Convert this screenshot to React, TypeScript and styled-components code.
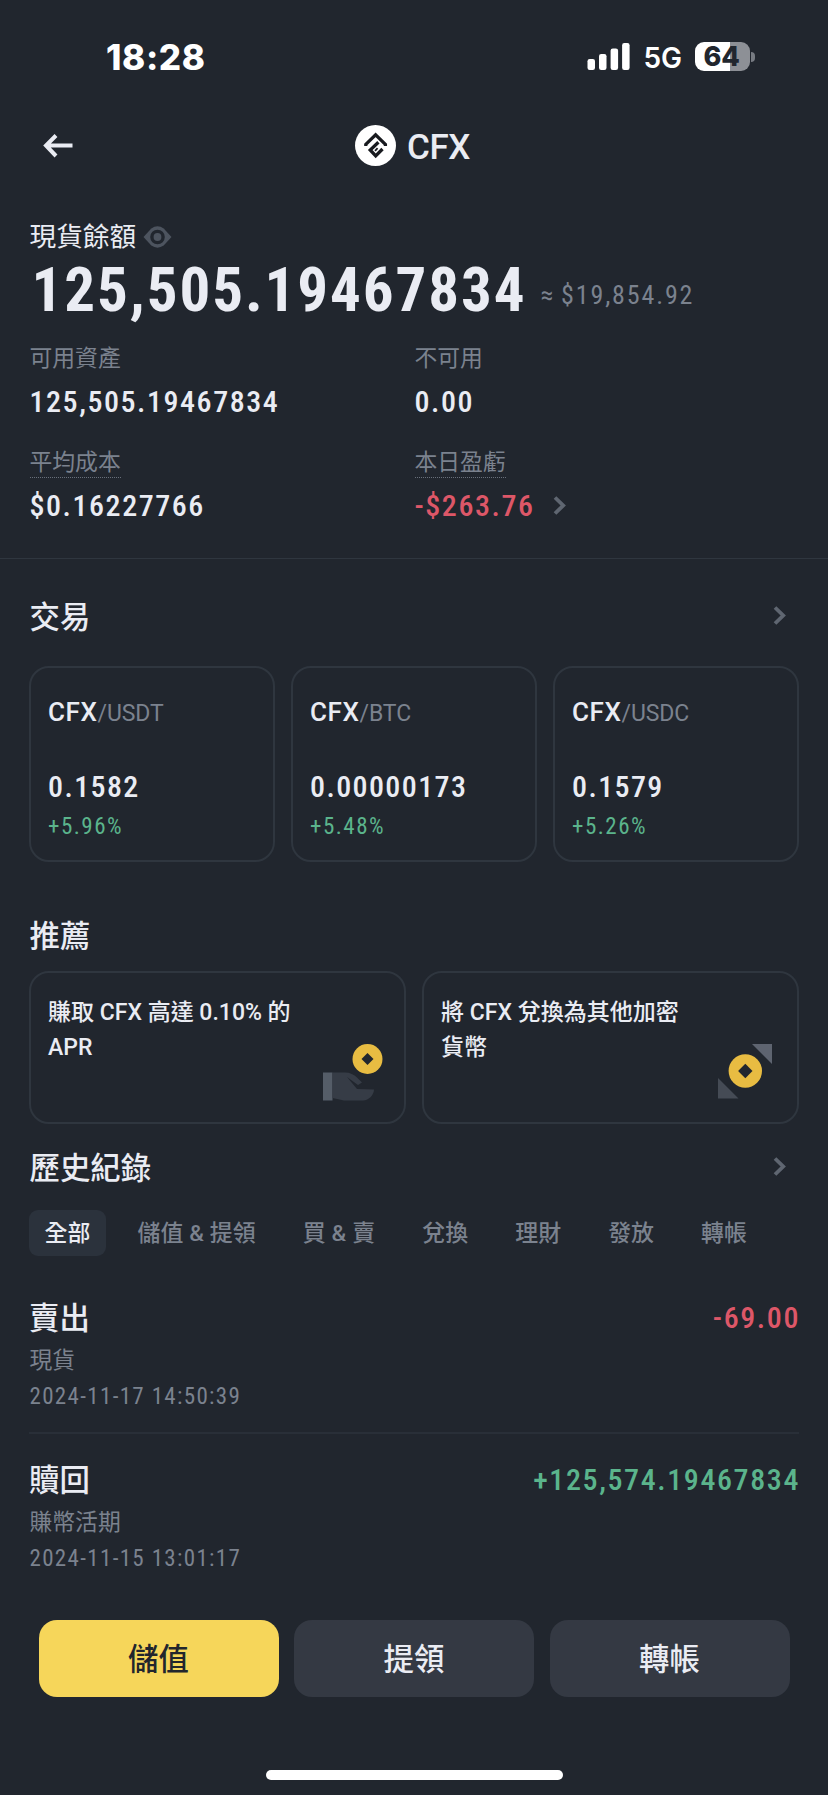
import React from "react";
import styled, { createGlobalStyle } from "styled-components";

const color = {
  bg: "#21262e",
  text: "#eaecf3",
  muted: "#7b828e",
  faint: "#5a616c",
  line: "#2f363f",
  green: "#5bb48c",
  red: "#dd5768",
  yellow: "#f6d65a",
  button: "#343943",
};

const GlobalStyle = createGlobalStyle`
  html, body { margin: 0; padding: 0; background: ${color.bg}; }
  * { box-sizing: border-box; }
  body { font-family: Roboto, "Noto Sans CJK TC", sans-serif; color: ${color.text}; }
`;

const Screen = styled.main`
  width: 828px;
  height: 1795px;
  display: flex;
  flex-direction: column;
  overflow: hidden;
  background: ${color.bg};
`;

const StatusBar = styled.header`
  height: 113px;
  display: flex;
  align-items: center;
  justify-content: space-between;
  padding: 0 73px 0 106px;
  font-family: Inter, sans-serif;
`;

const Clock = styled.span`
  font-size: 35px;
  font-weight: 800;
  line-height: 40px;
  letter-spacing: 0.6px;
  color: #fff;
`;

const StatusIcons = styled.div`
  display: flex;
  align-items: center;
  color: #fff;
`;

const Network = styled.span`
  margin: 2px 13px 0 13px;
  font-size: 28px;
  font-weight: 600;
  line-height: 30px;
`;

const Battery = styled.div`
  display: flex;
  align-items: center;
  gap: 1px;
`;

const BatteryBody = styled.div<{ $level: number }>`
  width: 55px;
  height: 29px;
  border-radius: 9px;
  display: flex;
  align-items: center;
  justify-content: center;
  padding-right: 2px;
  background: linear-gradient(90deg, #fff ${(p) => p.$level}%, #8d9096 ${(p) => p.$level}%);
  color: ${color.bg};
  font-size: 27px;
  font-weight: 800;
  letter-spacing: -0.3px;
  line-height: 29px;
`;

const BatteryTip = styled.div`
  width: 4px;
  height: 10px;
  border-radius: 0 5px 5px 0;
  background: #777b82;
`;

const NavBar = styled.nav`
  height: 65px;
  display: grid;
  grid-template-columns: 1fr auto 1fr;
  align-items: center;
  padding: 0 46px 0 43px;
`;

const CoinTitle = styled.h1`
  margin: 0;
  display: flex;
  align-items: center;
  gap: 11px;
  font-size: 35px;
  font-weight: 500;
  line-height: 40px;
  letter-spacing: -0.4px;

  span { margin-top: 4px; }
`;

const Balance = styled.section`
  padding: 41px 29px 25px 29.5px;
  border-bottom: 1px solid ${color.line};
`;

const BalanceLabel = styled.div`
  height: 36px;
  display: flex;
  align-items: center;
  gap: 7px;
  font-size: 26.7px;
  line-height: 37px;
`;

const Total = styled.div`
  height: 67px;
  display: flex;
  align-items: center;
  margin-left: 2px;
`;

const Amount = styled.span`
  margin-top: 4px;
  font-size: 61px;
  font-weight: 700;
  font-stretch: 75%;
  line-height: 67px;
  letter-spacing: 1.93px;
`;

const Approx = styled.span`
  margin: 12px 0 0 14px;
  font-size: 26px;
  line-height: 32px;
  font-stretch: 75%;
  letter-spacing: 1.85px;
  word-spacing: -2px;
  color: ${color.muted};
`;

const StatGrid = styled.div`
  display: grid;
  grid-template-columns: 385px 1fr;
  row-gap: 16px;
  margin-top: 19px;
`;

const StatLabel = styled.div`
  height: 34px;
  font-size: 22.8px;
  line-height: 35px;
  color: ${color.muted};
`;

const Hint = styled.span`
  display: inline-block;
  height: 33px;
  border-bottom: 1px dotted #69707b;
`;

const StatValue = styled.div<{ $tone?: string }>`
  height: 54px;
  display: flex;
  align-items: center;
  gap: 18px;
  font-size: 30px;
  font-weight: 500;
  font-stretch: 75%;
  line-height: 54px;
  letter-spacing: 1.55px;
  color: ${(p) => p.$tone ?? color.text};

  svg { margin-bottom: 2px; }
`;

const Section = styled.section<{ $top: number }>`
  padding: ${(p) => p.$top}px 29px 0;
`;

const SectionTitle = styled.h2`
  margin: 0;
  height: 44px;
  display: flex;
  align-items: center;
  justify-content: space-between;
  padding: 1px 13px 0 0.5px;
  font-size: 30.4px;
  font-weight: 500;
  line-height: 44px;

  svg { margin-bottom: 4px; }
`;

const Cards = styled.div<{ $columns: number; $top: number }>`
  display: grid;
  grid-template-columns: repeat(${(p) => p.$columns}, 1fr);
  gap: 16px;
  margin-top: ${(p) => p.$top}px;
`;

const Card = styled.article`
  border: 2px solid ${color.line};
  border-radius: 20px;
`;

const PairCard = styled(Card)`
  height: 196px;
  padding: 26px 17px 0;
`;

const PairName = styled.div`
  height: 36px;
  font-size: 26px;
  font-weight: 500;
  line-height: 36px;
  letter-spacing: 0.6px;

  span {
    font-size: 23px;
    font-weight: 400;
    letter-spacing: -0.1px;
    color: ${color.muted};
  }
`;

const PairPrice = styled.div`
  height: 40px;
  margin-top: 37px;
  font-size: 30px;
  font-weight: 500;
  font-stretch: 75%;
  line-height: 40px;
  letter-spacing: 1.4px;
`;

const PairChange = styled.div`
  height: 32px;
  margin-top: 4px;
  font-size: 23px;
  font-stretch: 75%;
  line-height: 32px;
  letter-spacing: 1.5px;
  color: ${color.green};
`;

const OfferCard = styled(Card)`
  height: 153px;
  display: flex;
  justify-content: space-between;
  padding: 22px 21px 18px 17px;
`;

const OfferText = styled.p`
  width: 250px;
  margin: 0;
  font-size: 23px;
  font-weight: 500;
  line-height: 35px;
`;

const OfferArt = styled.svg`
  flex: none;
  align-self: flex-end;
`;

const Tabs = styled.div`
  height: 46px;
  display: flex;
  margin-top: 20px;
`;

const Tab = styled.button<{ $active?: boolean }>`
  height: 46px;
  margin-right: 16px;
  padding: 1px 15.5px 0;
  border: 0;
  border-radius: 9px;
  background: ${(p) => (p.$active ? "#2b323c" : "transparent")};
  color: ${(p) => (p.$active ? color.text : color.muted)};
  font: 500 22.9px/46px Roboto, "Noto Sans CJK TC", sans-serif;
  letter-spacing: 0.1px;
  white-space: nowrap;
`;

const Entry = styled.article`
  padding-bottom: 19px;

  & + & {
    padding-top: 24px;
    border-top: 2px solid #292f38;
  }
`;

const EntryHead = styled.div<{ $tone: string }>`
  height: 44px;
  display: flex;
  align-items: center;
  justify-content: space-between;
  font-size: 30.4px;
  font-weight: 500;
  line-height: 45px;

  b {
    margin-right: -1px;
    font-size: 30px;
    font-weight: 500;
    font-stretch: 75%;
    line-height: 44px;
    letter-spacing: 1.6px;
    color: ${(p) => p.$tone};
  }
`;

const EntryMeta = styled.div`
  padding: 3px 0 0 0.5px;
  font-size: 22.8px;
  line-height: 36px;
  color: ${color.muted};
`;

const EntryDate = styled.div`
  height: 34px;
  font-size: 23px;
  font-stretch: 75%;
  line-height: 35px;
  letter-spacing: 1.33px;
`;

const Actions = styled.footer`
  display: grid;
  grid-template-columns: repeat(3, 1fr);
  gap: 15.5px;
  padding: 26px 38.5px 0;
`;

const ActionButton = styled.button<{ $primary?: boolean }>`
  height: 77px;
  padding: 2px 0 0;
  border: 0;
  border-radius: 18px;
  background: ${(p) => (p.$primary ? color.yellow : color.button)};
  color: ${(p) => (p.$primary ? "#22262d" : color.text)};
  font: 500 30.4px/75px Roboto, "Noto Sans CJK TC", sans-serif;
`;

const HomeIndicator = styled.div`
  width: 297px;
  height: 10px;
  margin: 73px auto 0;
  border-radius: 5px;
  background: #fff;
`;

const SignalIcon = () => (
  <svg width="43" height="27" viewBox="0 0 43 27" fill="#fff">
    <rect x="0.5" y="16" width="7.5" height="11" rx="2.2" />
    <rect x="12" y="11" width="7.5" height="16" rx="2.2" />
    <rect x="23.6" y="5.5" width="7.5" height="21.5" rx="2.2" />
    <rect x="35.1" y="0" width="7.5" height="27" rx="2.2" />
  </svg>
);

const BackIcon = () => (
  <svg width="31" height="24" viewBox="0 0 31 24" fill="none" stroke={color.text} strokeWidth="4">
    <path d="M29.5 11.5H4M13 1.500L3 11.500l10 10.500" />
  </svg>
);

const CoinLogo = () => (
  <svg width="41" height="41" viewBox="0 0 41 41">
    <circle cx="20.5" cy="20.5" r="20.5" fill="#fff" />
    <g fill="none" stroke="#181a1f" strokeWidth="3.3">
      <path d="M10.800 21v-1.600L20.600 9.800l9.800 9.600V21" />
      <path d="M23.400 17.200L15.200 25l5.500 5.900 6.800-6.900" />
      <path d="M20 25.800l2.600-2.600" strokeWidth="1.800" />
    </g>
  </svg>
);

const EyeIcon = () => (
  <svg width="29" height="22" viewBox="0 0 29 22">
    <path
      d="M.5 11L8.3 2.5Q14.5-1.8 20.7 2.5L28.5 11l-7.8 8.5q-6.2 4.3-12.4 0z"
      fill="#4d545f"
    />
    <circle cx="14.5" cy="11" r="5.6" fill="#4d545f" stroke={color.bg} strokeWidth="3.4" />
  </svg>
);

const Chevron = () => (
  <svg width="13" height="19" viewBox="0 0 13 19" fill="none" stroke="#5f6671" strokeWidth="3.8">
    <path d="M2 1.5l8.2 8L2 17.5" />
  </svg>
);

const EarnArt = () => (
  <OfferArt width="60" height="60" viewBox="0 0 60 60">
    <rect x="0" y="28.5" width="9.5" height="28" fill="#555d68" />
    <path
      d="M9.500 28.500H22c5 0 9 2 12 5l5 5-4 2.500-11-8 10 12 17 .5c0 5-5 11-11 11H21L9.500 54z"
      fill="#363c46"
    />
    <circle cx="44.5" cy="15" r="15" fill="#e8bc42" />
    <path d="M44.5 9l6 6-6 6-6-6z" fill={color.bg} />
  </OfferArt>
);

const ConvertArt = () => (
  <OfferArt width="60" height="60" viewBox="0 0 60 60">
    <path d="M36 0h20v20z" fill="#5e6470" />
    <path d="M2 34v20.500h20.500z" fill="#454b55" />
    <circle cx="29.3" cy="27" r="16.7" fill="#e8bc42" />
    <path d="M29.300 19.800l7.200 7.200-7.200 7.200-7.200-7.200z" fill={color.bg} />
  </OfferArt>
);

const pairs = [
  { quote: "USDT", price: "0.1582", change: "+5.96%" },
  { quote: "BTC", price: "0.00000173", change: "+5.48%" },
  { quote: "USDC", price: "0.1579", change: "+5.26%" },
];

const tabs = ["全部", "儲值 & 提領", "買 & 賣", "兌換", "理財", "發放", "轉帳"];

const entries = [
  { title: "賣出", amount: "-69.00", account: "現貨", date: "2024-11-17 14:50:39" },
  { title: "贖回", amount: "+125,574.19467834", account: "賺幣活期", date: "2024-11-15 13:01:17" },
];

export default function App() {
  return (
    <Screen>
      <GlobalStyle />
      <StatusBar>
        <Clock>18:28</Clock>
        <StatusIcons>
          <SignalIcon />
          <Network>5G</Network>
          <Battery>
            <BatteryBody $level={63}>64</BatteryBody>
            <BatteryTip />
          </Battery>
        </StatusIcons>
      </StatusBar>

      <NavBar>
        <BackIcon />
        <CoinTitle>
          <CoinLogo />
          <span>CFX</span>
        </CoinTitle>
      </NavBar>

      <Balance>
        <BalanceLabel>
          現貨餘額
          <EyeIcon />
        </BalanceLabel>
        <Total>
          <Amount>125,505.19467834</Amount>
          <Approx>≈ $19,854.92</Approx>
        </Total>
        <StatGrid>
          <div>
            <StatLabel>可用資產</StatLabel>
            <StatValue>125,505.19467834</StatValue>
          </div>
          <div>
            <StatLabel>不可用</StatLabel>
            <StatValue>0.00</StatValue>
          </div>
          <div>
            <StatLabel><Hint>平均成本</Hint></StatLabel>
            <StatValue>$0.16227766</StatValue>
          </div>
          <div>
            <StatLabel><Hint>本日盈虧</Hint></StatLabel>
            <StatValue $tone={color.red}>
              -$263.76
              <Chevron />
            </StatValue>
          </div>
        </StatGrid>
      </Balance>

      <Section $top={36}>
        <SectionTitle>
          交易
          <Chevron />
        </SectionTitle>
        <Cards $columns={3} $top={27}>
          {pairs.map((pair) => (
            <PairCard key={pair.quote}>
              <PairName>CFX<span>/{pair.quote}</span></PairName>
              <PairPrice>{pair.price}</PairPrice>
              <PairChange>{pair.change}</PairChange>
            </PairCard>
          ))}
        </Cards>
      </Section>

      <Section $top={52}>
        <SectionTitle>推薦</SectionTitle>
        <Cards $columns={2} $top={13}>
          <OfferCard>
            <OfferText>賺取 CFX 高達 0.10% 的 APR</OfferText>
            <EarnArt />
          </OfferCard>
          <OfferCard>
            <OfferText>將 CFX 兌換為其他加密貨幣</OfferText>
            <ConvertArt />
          </OfferCard>
        </Cards>
      </Section>

      <Section $top={22}>
        <SectionTitle>
          歷史紀錄
          <Chevron />
        </SectionTitle>
        <Tabs>
          {tabs.map((tab, i) => (
            <Tab key={tab} $active={i === 0}>{tab}</Tab>
          ))}
        </Tabs>
      </Section>

      <Section $top={40}>
        {entries.map((entry) => (
          <Entry key={entry.date}>
            <EntryHead $tone={entry.amount.startsWith("-") ? color.red : color.green}>
              {entry.title}
              <b>{entry.amount}</b>
            </EntryHead>
            <EntryMeta>
              {entry.account}
              <EntryDate>{entry.date}</EntryDate>
            </EntryMeta>
          </Entry>
        ))}
      </Section>

      <Actions>
        <ActionButton $primary>儲值</ActionButton>
        <ActionButton>提領</ActionButton>
        <ActionButton>轉帳</ActionButton>
      </Actions>
      <HomeIndicator />
    </Screen>
  );
}
